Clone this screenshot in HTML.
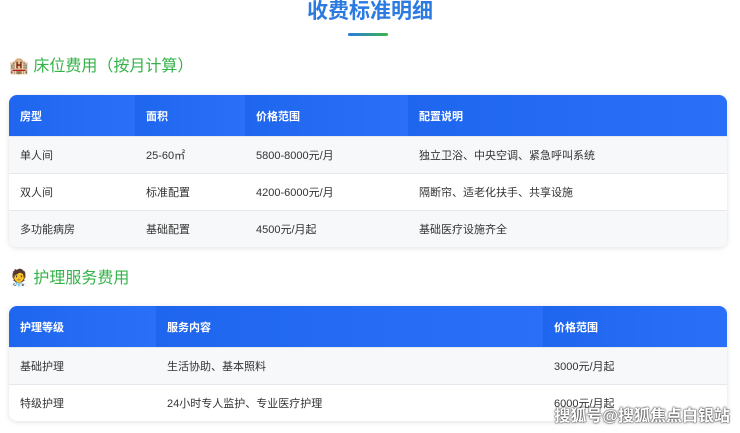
<!DOCTYPE html><html><head><meta charset="utf-8"><style>
body{margin:0;width:740px;height:433px;overflow:hidden;background:#fff;font-family:"Liberation Sans","Noto Sans CJK SC",sans-serif;position:relative}
.t{position:absolute;left:0;width:740px;text-align:center;top:-2px;font-size:21px;font-weight:bold;color:#2a7ae2;line-height:28px}
.ul{position:absolute;left:348px;top:33px;width:40px;height:3px;background:linear-gradient(90deg,#2a7ae2,#3cb54a);border-radius:2px}
h2{position:absolute;margin:0;font-size:16px;font-weight:normal;color:#35b24a;line-height:22px}
table{position:absolute;left:9px;width:718px;border-collapse:collapse;font-size:11px;color:#333;border-radius:8px;overflow:hidden;box-shadow:0 1px 6px rgba(0,0,0,.12)}
th{background:linear-gradient(90deg,#1f66ef,#2a6ff7);color:#fff;text-align:left;font-weight:bold;padding:0 0 0 11px;height:41px}
td{padding:0 0 0 11px;height:36px;border-top:1px solid #e6e8ee}
tr.a td{background:#f7f8fa}
.wm{position:absolute;right:10px;top:402px;font-size:16px;color:#fff;font-weight:bold;text-shadow:0 0 2px #333,0 0 1px #000}
</style></head><body>
<div class="t">收费标准明细</div><div class="ul"></div>
<h2 style="left:9px;top:56px">🏨 床位费用（按月计算）</h2>
<table style="top:95px"><tr><th style="width:115px">房型</th><th style="width:99px">面积</th><th style="width:152px">价格范围</th><th>配置说明</th></tr>
<tr class="a"><td>单人间</td><td>25-60㎡</td><td>5800-8000元/月</td><td>独立卫浴、中央空调、紧急呼叫系统</td></tr>
<tr><td>双人间</td><td>标准配置</td><td>4200-6000元/月</td><td>隔断帘、适老化扶手、共享设施</td></tr>
<tr class="a"><td>多功能病房</td><td>基础配置</td><td>4500元/月起</td><td>基础医疗设施齐全</td></tr></table>
<h2 style="left:9px;top:268px">🧑‍⚕️ 护理服务费用</h2>
<table style="top:306px"><tr><th style="width:136px">护理等级</th><th style="width:376px">服务内容</th><th>价格范围</th></tr>
<tr class="a"><td>基础护理</td><td>生活协助、基本照料</td><td>3000元/月起</td></tr>
<tr><td>特级护理</td><td>24小时专人监护、专业医疗护理</td><td>6000元/月起</td></tr></table>
<div class="wm">搜狐号@搜狐焦点白银站</div>
</body></html>
